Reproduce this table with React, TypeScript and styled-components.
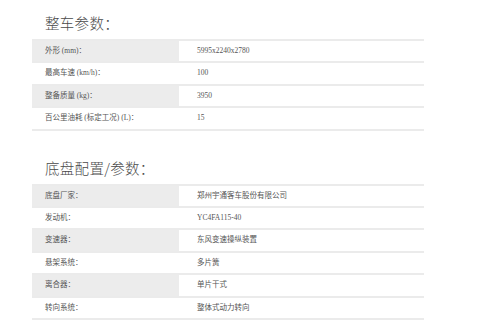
import React from "react";
import styled, { createGlobalStyle } from "styled-components";

const Global = createGlobalStyle`
  html, body { margin: 0; padding: 0; background: #fff; }
  body { font-family: "Liberation Serif", "Noto Sans CJK SC", serif; }
`;

const Page = styled.div`
  width: 480px;
  height: 320px;
  overflow: hidden;
  padding: 0 56px 0 32px;
  box-sizing: border-box;
`;

const Section = styled.section<{ $top: number }>`
  padding-top: ${(p) => p.$top}px;
`;

const Heading = styled.h2`
  margin: 0;
  padding: 0 0 6px 13px;
  font-family: "Noto Sans CJK SC", sans-serif;
  font-size: 14.5px;
  line-height: 20px;
  font-weight: 300;
  color: #4a4a4a;
  letter-spacing: 0.3px;
`;

const Table = styled.div`
  width: 392px;
  display: flex;
  flex-direction: column;
`;

const Row = styled.div<{ $shade: boolean }>`
  display: grid;
  grid-template-columns: 147px 1fr;
  height: 20.4px;
  border-top: 2px solid #ebebeb;
  background: ${(p) => (p.$shade ? "#ececec" : "#fff")};
  &:last-child { border-bottom: 2px solid #ebebeb; }
`;

const Label = styled.div`
  padding-left: 13px;
  font-size: 7.5px;
  line-height: 20px;
  color: #555;
  white-space: nowrap;
`;

const Value = styled.div`
  padding-left: 18px;
  background: #fff;
  font-size: 7.5px;
  line-height: 20px;
  color: #555;
  white-space: nowrap;
`;

const car: [string, string][] = [
  ["外形 (mm)：", "5995x2240x2780"],
  ["最高车速 (km/h)：", "100"],
  ["整备质量 (kg)：", "3950"],
  ["百公里油耗 (标定工况) (L)：", "15"],
];

const chassis: [string, string][] = [
  ["底盘厂家：", "郑州宇通客车股份有限公司"],
  ["发动机：", "YC4FA115-40"],
  ["变速器：", "东风变速操纵装置"],
  ["悬架系统：", "多片簧"],
  ["离合器：", "单片干式"],
  ["转向系统：", "整体式动力转向"],
  ["", ""],
];

function Spec({ rows }: { rows: [string, string][] }) {
  return (
    <Table>
      {rows.map(([k, v], i) => (
        <Row key={i} $shade={i % 2 === 0}>
          <Label>{k}</Label>
          <Value>{v}</Value>
        </Row>
      ))}
    </Table>
  );
}

export default function App() {
  return (
    <Page>
      <Global />
      <Section $top={13}>
        <Heading>整车参数：</Heading>
        <Spec rows={car} />
      </Section>
      <Section $top={27}>
        <Heading>底盘配置/参数：</Heading>
        <Spec rows={chassis} />
      </Section>
    </Page>
  );
}
